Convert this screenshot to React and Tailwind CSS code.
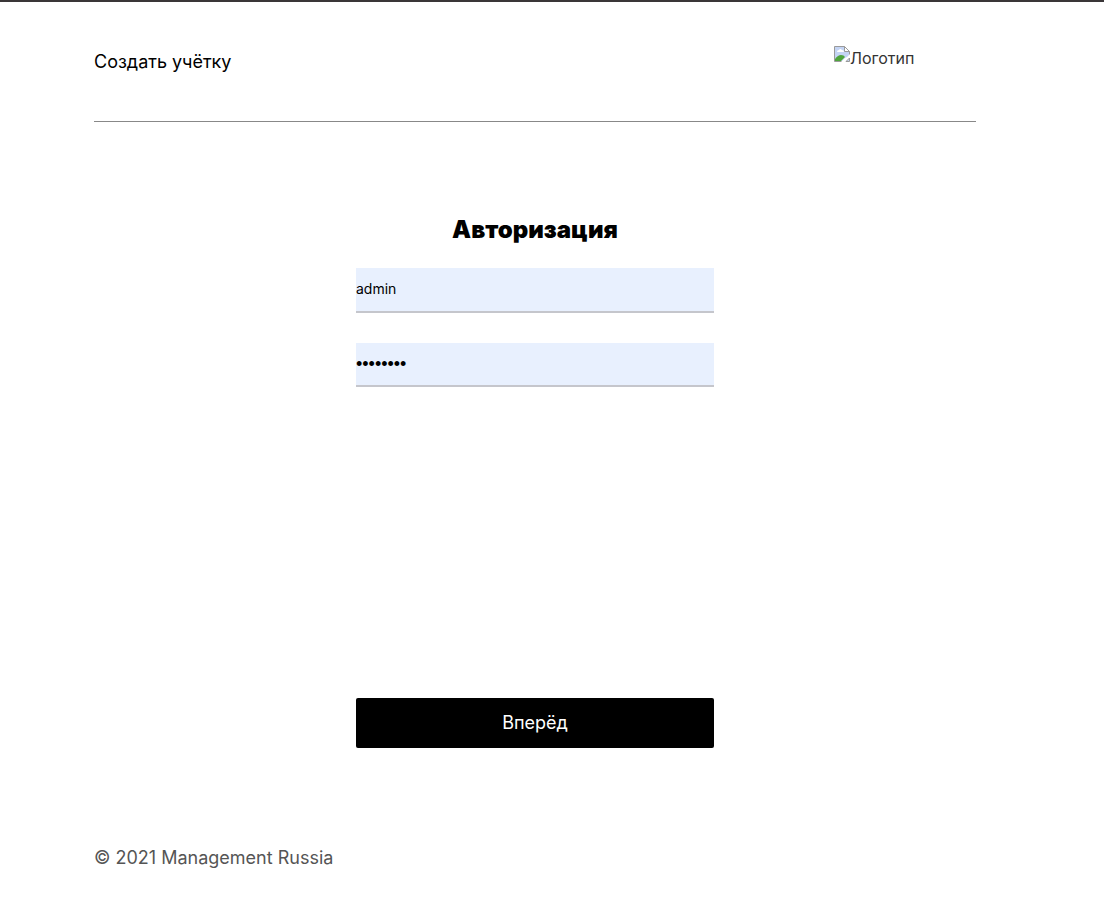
export default function App() {
  return (
    <div className="min-h-screen border-t-2 border-[#3a3638] bg-white font-[Inter,sans-serif] text-black">
      <div className="pr-32 pl-[94px]">
        <header className="flex h-[120px] items-start justify-between border-b border-[#888]">
          <a href="#register" className="mt-[46px] text-lg leading-7">Создать учётку</a>
          <a href="#home" className="mt-11 flex w-[142px] items-start text-base leading-6 text-[#333]">
            <BrokenImage />
            <span>Логотип</span>
          </a>
        </header>
        <main>
          <form className="mx-auto flex h-[626px] w-[358px] max-w-full flex-col" onSubmit={(e) => e.preventDefault()}>
            <h1 className="mt-[92px] text-center text-2xl leading-8 font-black">Авторизация</h1>
            <input aria-label="Логин" type="text" defaultValue="admin" className="mt-[22px] h-[45px] border-b-2 border-[#c5c6cc] bg-[#e8f0fe] pb-0.5 text-sm outline-none" />
            <input aria-label="Пароль" type="password" defaultValue="password" className="mt-[30px] h-11 border-b-2 border-[#c5c6cc] bg-[#e8f0fe] font-['Liberation_Sans',sans-serif] text-lg outline-none" />
            <button type="submit" className="mt-auto h-[50px] rounded-xs bg-black text-lg text-white">Вперёд</button>
          </form>
        </main>
        <footer className="mt-24 text-lg leading-7 text-[#555]">© 2021 Management Russia</footer>
      </div>
    </div>
  );
}

function BrokenImage() {
  return (
    <svg width="16" height="16" viewBox="0 0 16 16" aria-hidden="true">
      <path d="M0.5 0.5h10l5 5v4l-6 6h-9z" fill="#c4d4f4" stroke="#9a9a9a" />
      <path d="M3 6q0-2 2-2 1-2 3 0 2 0 2 2z" fill="#fff" />
      <path d="M1 15v-2q3-4 6-4 3 0 4 2l-4 4z" fill="#4fa53c" />
      <path d="M10.5 0.5v5h5z" fill="#fff" stroke="#9a9a9a" />
      <path d="M16 8v3l-5 5H7l4-4 2-1z" fill="#fff" />
      <path d="M15.5 12v3.5H12z" fill="#c4d4f4" stroke="#9a9a9a" />
    </svg>
  );
}
